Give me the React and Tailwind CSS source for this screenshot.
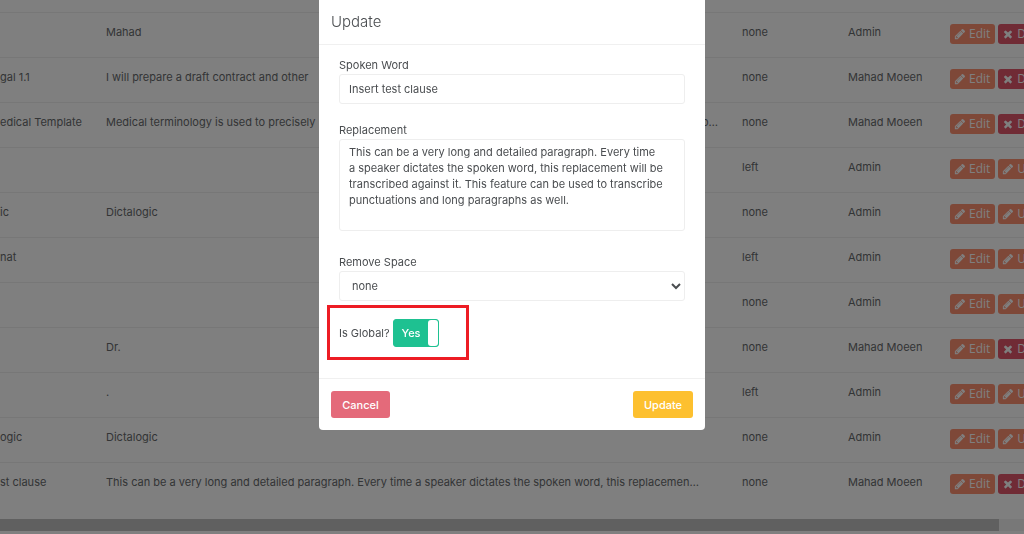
import { useState } from 'react';

const rows = [
  { name: '', replacement: 'Mahad', space: 'none', owner: 'Admin', action: 'delete' },
  { name: 'gal 1.1', replacement: 'I will prepare a draft contract and other', space: 'none', owner: 'Mahad Moeen', action: 'delete' },
  { name: 'edical Template', replacement: 'Medical terminology is used to precisely', tail: 'o…', space: 'none', owner: 'Mahad Moeen', action: 'delete' },
  { name: '', replacement: '', space: 'left', owner: 'Admin', action: 'undelete' },
  { name: 'ic', replacement: 'Dictalogic', space: 'none', owner: 'Admin', action: 'undelete' },
  { name: 'nat', replacement: '', space: 'left', owner: 'Admin', action: 'undelete' },
  { name: '', replacement: '', space: 'none', owner: 'Admin', action: 'undelete' },
  { name: '', replacement: 'Dr.', space: 'none', owner: 'Mahad Moeen', action: 'delete' },
  { name: '', replacement: '.', space: 'left', owner: 'Admin', action: 'undelete' },
  { name: 'ogic', replacement: 'Dictalogic', space: 'none', owner: 'Admin', action: 'undelete' },
  {
    name: 'st clause',
    replacement: 'This can be a very long and detailed paragraph. Every time a speaker dictates the spoken word, this replacemen…',
    space: 'none',
    owner: 'Mahad Moeen',
    action: 'delete'
  }
];

const paragraph =
  'This can be a very long and detailed paragraph. Every time\na speaker dictates the spoken word, this replacement will be transcribed against it. This feature can be used to transcribe punctuations and long paragraphs as well.';

const PencilIcon = () => (
  <svg viewBox="0 0 1792 1792" className="size-3 shrink-0" fill="currentColor" aria-hidden="true">
    <path d="M491 1536l91-91-235-235-91 91v107h128v128h107zm523-928q0-22-22-22-10 0-17 7l-542 542q-7 7-7 17 0 22 22 22 10 0 17-7l542-542q7-7 7-17zm-54-192l416 416-832 832h-416v-416zm683 96q0 53-37 90l-166 166-416-416 166-165q36-38 90-38 53 0 91 38l235 234q37 39 37 91z" />
  </svg>
);

const TimesIcon = () => (
  <svg viewBox="0 0 1792 1792" className="size-3 shrink-0" fill="currentColor" aria-hidden="true">
    <path d="M1490 1322q0 40-28 68l-136 136q-28 28-68 28t-68-28l-294-294-294 294q-28 28-68 28t-68-28l-136-136q-28-28-28-68t28-68l294-294-294-294q-28-28-28-68t28-68l136-136q28-28 68-28t68 28l294 294 294-294q28-28 68-28t68 28l136 136q28 28 28 68t-28 68l-294 294 294 294q28 28 28 68z" />
  </svg>
);

const RowActions = ({ action }) => {
  const button = 'flex h-5 shrink-0 items-center gap-[3px] rounded-[3px] pr-[5px] pl-1';

  return (
    <div className="flex gap-[3px] font-['Open_Sans',sans-serif] text-xs leading-5 text-white">
      <button type="button" className={`${button} bg-[#fd9071]`}>
        <PencilIcon />
        Edit
      </button>
      {action === 'delete' ? (
        <button type="button" className={`${button} bg-[#e0566b]`}>
          <TimesIcon />
          Delete
        </button>
      ) : (
        <button type="button" className={`${button} bg-[#fd9071]`}>
          <PencilIcon />
          Undelete
        </button>
      )}
    </div>
  );
};

const ReplacementsTable = () => (
  <div className="overflow-hidden pt-3">
    <table className="w-full table-fixed border-collapse whitespace-nowrap text-left">
      <colgroup>
        <col className="w-[106px]" />
        <col />
        <col className="w-[106px]" />
        <col className="w-[102px]" />
        <col className="w-[74px]" />
      </colgroup>
      <tbody>
        {rows.map((row, i) => (
          <tr key={i} className="h-[45px] border-t border-[#efefef] align-top last:h-14">
            <td className="pt-[11px]">{row.name}</td>
            <td className="pt-[11px]">
              <div className="flex justify-between pr-6">
                <span>{row.replacement}</span>
                {row.tail && <span>{row.tail}</span>}
              </div>
            </td>
            <td className="pt-[11px]">{row.space}</td>
            <td className="pt-[11px]">{row.owner}</td>
            <td className="pt-[11px]">
              <RowActions action={row.action} />
            </td>
          </tr>
        ))}
      </tbody>
    </table>
    {/* horizontal scrollbar */}
    <div className="h-3 bg-[#f1f1f1] pr-[25px]">
      <div className="h-full bg-[#c1c1c1]" />
    </div>
  </div>
);

const UpdateModal = () => {
  const [formData, setFormData] = useState({
    word: 'Insert test clause',
    replacement: paragraph,
    space: 'none',
    isGlobal: true
  });

  const field = 'block w-full rounded-[3px] border border-[#eeeeee] bg-white text-[#4a4d50]';

  return (
    <div className="fixed inset-0 flex items-start justify-center bg-black/50">
      <div role="dialog" aria-label="Update" className="w-[386px] rounded-b bg-white text-[#4a4d50]">
        <div className="border-b border-[#f0f0f0] px-3 py-3">
          <h2 className="text-[15px] leading-5 font-light text-[#4a4d50]">Update</h2>
        </div>

        <form className="px-5 pt-[11px] pb-[31px]">
          <label htmlFor="word" className="block leading-[18px]">Spoken Word</label>
          <input
            id="word"
            type="text"
            value={formData.word}
            onChange={(e) => setFormData({ ...formData, word: e.target.value })}
            className={`${field} mb-[17px] h-[30px] px-[9px]`}
          />

          <label htmlFor="replacement" className="block leading-[18px]">Replacement</label>
          <textarea
            id="replacement"
            value={formData.replacement}
            onChange={(e) => setFormData({ ...formData, replacement: e.target.value })}
            className={`${field} mb-[22px] h-[92px] resize-none py-1 pr-1 pl-[9px] leading-4`}
          />

          <label htmlFor="space" className="block leading-[18px]">Remove Space</label>
          <select
            id="space"
            value={formData.space}
            onChange={(e) => setFormData({ ...formData, space: e.target.value })}
            className={`${field} mb-[18px] h-[30px] pl-2`}
          >
            <option value="none">none</option>
            <option value="left">left</option>
            <option value="right">right</option>
          </select>

          <div className="relative flex h-7 w-fit items-center">
            <label htmlFor="global" className="flex cursor-pointer items-center">
              <span className="w-[54px]">Is Global?</span>
              <span className="flex h-7 w-[46px] items-stretch rounded-[3px] border border-[#1ec191] bg-[#1ec191] text-white">
                <span className="flex flex-1 items-center justify-center font-medium">
                  {formData.isGlobal ? 'Yes' : 'No'}
                </span>
                <span className="w-[10px] rounded-[3px] bg-white" />
              </span>
            </label>
            <input
              id="global"
              type="checkbox"
              checked={formData.isGlobal}
              onChange={(e) => setFormData({ ...formData, isGlobal: e.target.checked })}
              className="sr-only"
            />
            {/* highlight frame */}
            <div className="pointer-events-none absolute -top-[14px] -left-3 h-[55px] w-[142px] border-3 border-[#ed1c24]" />
          </div>
        </form>

        <div className="flex justify-between border-t border-[#f0f0f0] p-3 font-medium text-white">
          <button type="button" className="h-[27px] w-[59px] rounded-[3px] bg-[#e46a7a]">Cancel</button>
          <button type="button" className="h-[27px] w-[60px] rounded-[3px] bg-[#fdc02f]">Update</button>
        </div>
      </div>
    </div>
  );
};

export default function App() {
  return (
    <div className="min-h-screen overflow-hidden bg-white font-['Inter',sans-serif] text-[11px] leading-4 text-[#676a6c]">
      <ReplacementsTable />
      <UpdateModal />
    </div>
  );
}
